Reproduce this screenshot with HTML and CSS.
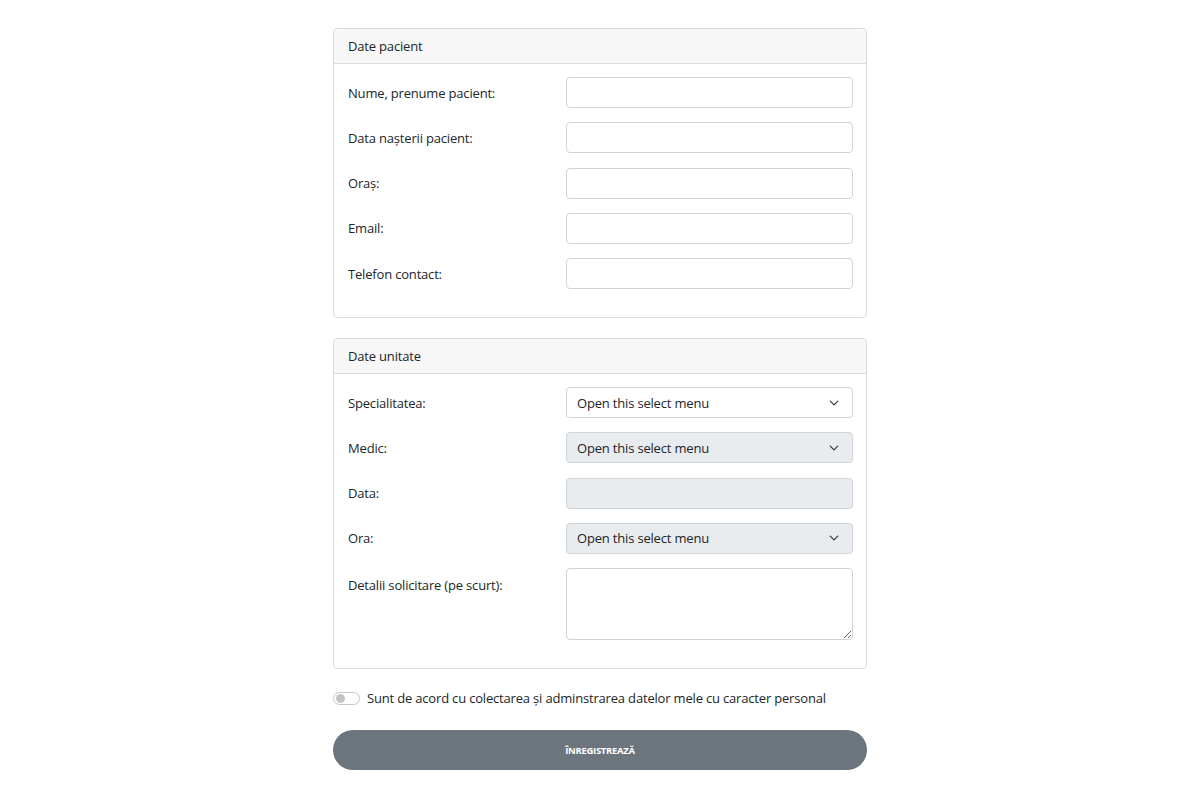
FILE: index.html
```html
<!DOCTYPE html>
<html lang="ro">
<head>
<meta charset="utf-8">
<link rel="stylesheet" href="styles.css">
</head>
<body>
<main class="wrap">
  <section class="card">
    <div class="card-header">Date pacient</div>
    <div class="card-body">
      <div class="row"><label class="lbl">Nume, prenume pacient:</label><input class="ctl" type="text"></div>
      <div class="row"><label class="lbl">Data nașterii pacient:</label><input class="ctl" type="text"></div>
      <div class="row"><label class="lbl">Oraș:</label><input class="ctl" type="text"></div>
      <div class="row"><label class="lbl">Email:</label><input class="ctl" type="text"></div>
      <div class="row"><label class="lbl">Telefon contact:</label><input class="ctl" type="text"></div>
    </div>
  </section>
  <section class="card">
    <div class="card-header">Date unitate</div>
    <div class="card-body">
      <div class="row"><label class="lbl">Specialitatea:</label>
        <div class="ctl sel"><span>Open this select menu</span><svg class="chev" viewBox="0 0 16 16" width="10" height="10"><path d="M2 5l6 6 6-6" fill="none" stroke="#343a40" stroke-width="2" stroke-linecap="round" stroke-linejoin="round"/></svg></div></div>
      <div class="row"><label class="lbl">Medic:</label>
        <div class="ctl sel dis"><span>Open this select menu</span><svg class="chev" viewBox="0 0 16 16" width="10" height="10"><path d="M2 5l6 6 6-6" fill="none" stroke="#343a40" stroke-width="2" stroke-linecap="round" stroke-linejoin="round"/></svg></div></div>
      <div class="row"><label class="lbl">Data:</label><div class="ctl dis"></div></div>
      <div class="row"><label class="lbl">Ora:</label>
        <div class="ctl sel dis"><span>Open this select menu</span><svg class="chev" viewBox="0 0 16 16" width="10" height="10"><path d="M2 5l6 6 6-6" fill="none" stroke="#343a40" stroke-width="2" stroke-linecap="round" stroke-linejoin="round"/></svg></div></div>
      <div class="row top"><label class="lbl">Detalii solicitare (pe scurt):</label><textarea class="ctl area"></textarea></div>
    </div>
  </section>
  <div class="agree"><span class="switch"><span class="knob"></span></span><span>Sunt de acord cu colectarea şi adminstrarea datelor mele cu caracter personal</span></div>
  <button class="btn" type="button">Înregistrează</button>
</main>
</body>
</html>
```
FILE: styles.css
```css
* { box-sizing: border-box; }
body {
  margin: 0;
  background: #fff;
  font-family: "Open Sans", "Noto Sans", sans-serif;
  font-size: 13px;
  letter-spacing: -0.18px;
  color: #212529;
}
.wrap {
  width: 534px;
  margin: 28px auto 0;
  display: flex;
  flex-direction: column;
}
.card {
  border: 1px solid #dcdcdc;
  border-radius: 4px;
  margin-bottom: 20px;
}
.card-header {
  height: 35px;
  display: flex;
  align-items: center;
  padding: 0 14px;
  background: #f7f7f7;
  border-bottom: 1px solid #dcdcdc;
  border-radius: 4px 4px 0 0;
}
.card-body {
  padding: 13px 13px 13px 14px;
  display: flex;
  flex-direction: column;
  gap: 14.25px;
}
.card-body .row:last-child { margin-bottom: 15px; }
.row {
  display: grid;
  grid-template-columns: 218px 1fr;
  align-items: center;
}
.row.top { align-items: start; }
.row.top .lbl { padding-top: 8px; }
.ctl {
  height: 31px;
  border: 1px solid #ced4da;
  border-radius: 4px;
  background: #fff;
  font: inherit;
  margin: 0;
  padding: 0 10px;
}
.sel {
  display: flex;
  align-items: center;
  justify-content: space-between;
  padding: 0 13px 0 10px;
}
.dis { background: #e9ecef; }
.area {
  height: 72px;
  resize: vertical;
  display: block;
  width: 100%;
}
.agree {
  display: flex;
  align-items: center;
  gap: 7px;
  margin-top: 1px;
  height: 16px;
}
.switch {
  width: 27px;
  height: 13px;
  border: 1px solid #c6c6c6;
  border-radius: 7px;
  display: flex;
  align-items: center;
  padding-left: 2px;
}
.knob {
  width: 9px;
  height: 9px;
  border-radius: 50%;
  background: #c4c4c4;
}
.btn {
  margin-top: 24px;
  height: 40px;
  width: 100%;
  border: 0;
  border-radius: 20px;
  background: #6c757d;
  color: #fff;
  font-family: "Open Sans", sans-serif;
  font-weight: 700;
  font-size: 9.5px;
  text-transform: uppercase;
  letter-spacing: -0.3px;
}
```
